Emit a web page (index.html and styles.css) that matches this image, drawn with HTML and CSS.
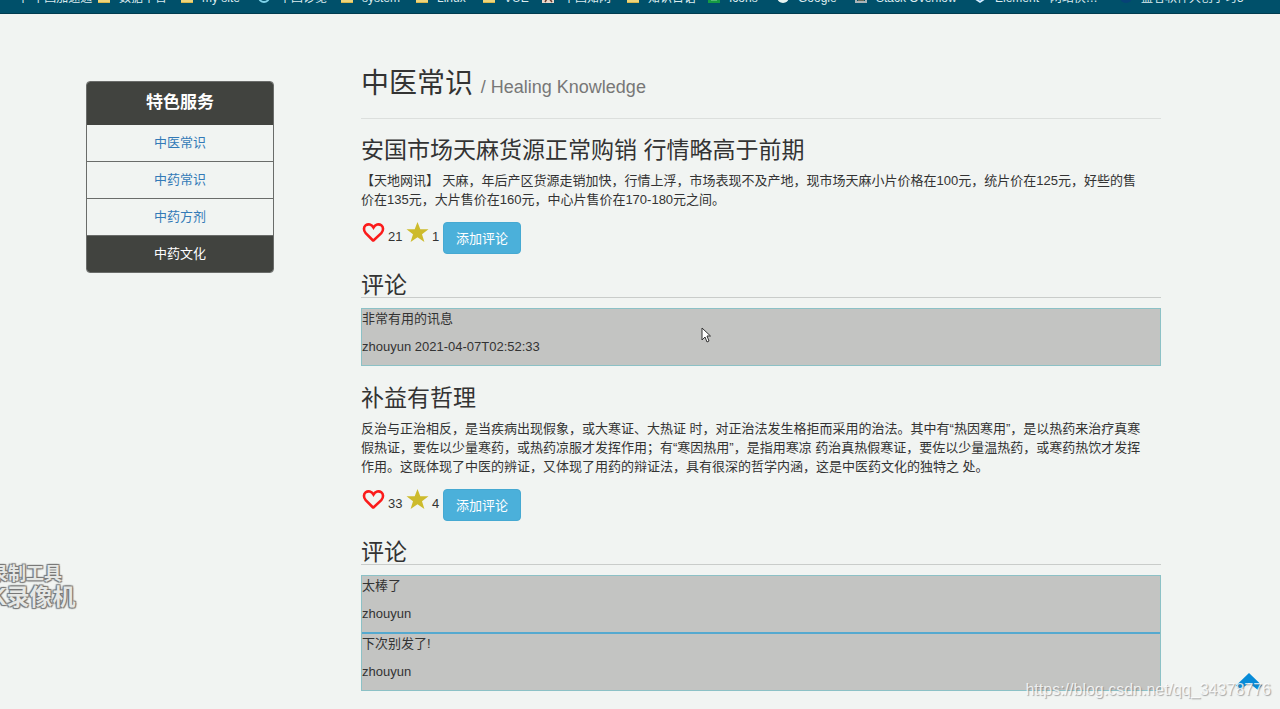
FILE: index.html
```html
<!DOCTYPE html>
<html lang="zh-CN">
<head>
<meta charset="utf-8">
<title>中医常识</title>
<link rel="stylesheet" href="styles.css">
</head>
<body>
<svg class="defs" aria-hidden="true">
  <symbol id="folder" viewBox="0 0 12 14"><path d="M0 3h5l1 2h6v9H0z" fill="#f0d57a"/><path d="M0 13h12v1H0z" fill="#d9b84e"/></symbol>
  <symbol id="heart" viewBox="0 0 24 22"><path d="M12 18.500 4.700 11.200C2.300 8.500 2.500 5 4.700 3.300 7.300 1.400 10.500 2.400 12.500 5.500 14.500 2.400 17.700 1.400 20.300 3.300 22.500 5 22.700 8.500 20.300 11.200L12.500 18.500Z" fill="none" stroke="#fb1b1b" stroke-width="2.600"/></symbol>
  <symbol id="star" viewBox="0 0 24 22"><path d="m12.500 0 2.800 7.300H23.500l-6.500 5 2.400 7.700L12.500 15.300 5.600 20l2.400-7.700-6.500-5h8.200z" fill="#cdbb2c"/></symbol>
</svg>

<nav class="bookmarks" aria-label="书签">
  <a href="#"><span>中 中国加速通</span></a>
  <a href="#"><svg><use href="#folder"/></svg><span>数据平台</span></a>
  <a href="#"><svg><use href="#folder"/></svg><span>my site</span></a>
  <a href="#"><svg viewBox="0 0 12 14"><circle cx="6" cy="8" r="5" fill="none" stroke="#7fd3ea" stroke-width="2"/></svg><span>中国诊览</span></a>
  <a href="#"><svg><use href="#folder"/></svg><span>system</span></a>
  <a href="#"><svg><use href="#folder"/></svg><span>Linux</span></a>
  <a href="#"><svg><use href="#folder"/></svg><span>VUE</span></a>
  <a href="#"><svg viewBox="0 0 12 14"><path d="M0 1h12v13H0z" fill="#ead9cc"/><path d="m3 13 3-5 4 5M4 6l5 4" fill="none" stroke="#6b3a2c" stroke-width="1.500"/></svg><span>中国知网</span></a>
  <a href="#"><svg><use href="#folder"/></svg><span>知识日语</span></a>
  <a href="#"><svg viewBox="0 0 12 14"><path d="M0 1h12v13H0z" fill="#159a43"/><path d="M3 11h6" stroke="#8fd5a5"/></svg><span>Icons</span></a>
  <a href="#"><svg viewBox="0 0 12 14"><circle cx="6" cy="8" r="6" fill="#e8f4f1"/><circle cx="6" cy="8" r="3" fill="#2b9a60"/></svg><span>Google</span></a>
  <a href="#"><svg viewBox="0 0 12 14"><path d="M1 6v7h10V6" fill="none" stroke="#a9b4b8" stroke-width="2"/><path d="M3 10h6" stroke="#d98642" stroke-width="3"/></svg><span>Stack Overflow</span></a>
  <a href="#"><svg viewBox="0 0 12 14"><path d="m6 1 6 4v5l-6 4-6-4V5z" fill="#d8efff"/><path d="m6 4 3 2v4l-3 2-3-2V6z" fill="#3f9be8"/></svg><span>Element - 网站快…</span></a>
  <a href="#"><svg viewBox="0 0 12 14"><circle cx="6" cy="8" r="6" fill="#064277"/></svg><span>益者软件大创学习5</span></a>
</nav>

<div class="page">
  <aside class="services">
    <h2>特色服务</h2>
    <ul>
      <li><a href="#">中医常识</a></li>
      <li><a href="#">中药常识</a></li>
      <li><a href="#">中药方剂</a></li>
      <li class="active"><a href="#">中药文化</a></li>
    </ul>
  </aside>

  <main>
    <header class="page-header">
      <h1>中医常识 <small>/ Healing Knowledge</small></h1>
    </header>

    <article>
      <h3>安国市场天麻货源正常购销 行情略高于前期</h3>
      <p>【天地网讯】 天麻，年后产区货源走销加快，行情上浮，市场表现不及产地，现市场天麻小片价格在100元，统片价在125元，好些的售<br>价在135元，大片售价在160元，中心片售价在170-180元之间。</p>
      <div class="actions">
        <svg role="img" aria-label="喜欢"><use href="#heart"/></svg><span class="count">21</span>
        <svg role="img" aria-label="收藏"><use href="#star"/></svg><span class="count end">1</span>
        <button type="button">添加评论</button>
      </div>
      <h3 class="comments-title">评论</h3>
      <ul class="comments">
        <li><p>非常有用的讯息</p><p>zhouyun 2021-04-07T02:52:33</p></li>
      </ul>
    </article>

    <article>
      <h3>补益有哲理</h3>
      <p>反治与正治相反，是当疾病出现假象，或大寒证、大热证 时，对正治法发生格拒而采用的治法。其中有“热因寒用”，是以热药来治疗真寒<br>假热证，要佐以少量寒药，或热药凉服才发挥作用；有“寒因热用”，是指用寒凉 药治真热假寒证，要佐以少量温热药，或寒药热饮才发挥<br>作用。这既体现了中医的辨证，又体现了用药的辩证法，具有很深的哲学内涵，这是中医药文化的独特之 处。</p>
      <div class="actions">
        <svg role="img" aria-label="喜欢"><use href="#heart"/></svg><span class="count">33</span>
        <svg role="img" aria-label="收藏"><use href="#star"/></svg><span class="count end">4</span>
        <button type="button">添加评论</button>
      </div>
      <h3 class="comments-title">评论</h3>
      <ul class="comments">
        <li><p>太棒了</p><p>zhouyun</p></li>
        <li><p>下次别发了!</p><p>zhouyun</p></li>
      </ul>
    </article>
  </main>
</div>

<div class="recorder"><div>录制工具</div><div class="big">K录像机</div></div>
<a class="to-top" href="#" aria-label="返回顶部"><svg viewBox="0 0 26 18"><path d="M13 0 26 12.500 22 17 13 10 4 17 0 12.500Z" fill="#078bd8"/></svg></a>
<div class="watermark">https://blog.csdn.net/qq_34378776</div>
<svg class="cursor" viewBox="0 0 10 16" aria-hidden="true"><path d="M1 1v12l3-3 2 5 2-1-2-5h3.500z" fill="#fff" stroke="#333"/></svg>
</body>
</html>
```

FILE: styles.css
```css
* { box-sizing: border-box; }
body {
  margin: 0;
  background: #f1f4f2;
  color: #333;
  font: 13px/19px "Liberation Sans", "Noto Sans CJK SC", sans-serif;
}
h1, h2, h3, p, ul { margin: 0; padding: 0; font-weight: 400; }
ul { list-style: none; }
a { color: #337ab7; text-decoration: none; }
.defs { display: none; }

.bookmarks {
  display: grid;
  grid-template-columns: 81px 83px 77px 83px 75px 67px 59px 85px 81px 69px 78px 119px 146px 1fr;
  align-content: end;
  height: 14px;
  padding: 0 0 6px 17px;
  overflow: hidden;
  background: #00506a;
  border-bottom: 1px solid #003c50;
}
.bookmarks a {
  display: flex;
  align-items: flex-end;
  gap: 9px;
  height: 18px;
  color: #dcebef;
  font-size: 12px;
  line-height: 18px;
  white-space: nowrap;
}
.bookmarks svg { flex: none; width: 12px; height: 14px; margin-bottom: 4px; }

.page {
  display: grid;
  grid-template-columns: 188px 1fr;
  column-gap: 87px;
  align-items: start;
  padding: 51px 119px 16px 86px;
}

.services {
  margin-top: 16px;
  overflow: hidden;
  border: 1px solid #6a6c6a;
  border-radius: 4px;
  text-align: center;
}
.services h2 {
  padding: 10px 0 11px;
  background: #41433f;
  color: #fff;
  font-size: 17px;
  font-weight: 700;
  line-height: 22px;
}
.services li { padding: 8px 0 9px; line-height: 19px; }
.services li + li { border-top: 1px solid #6a6c6a; }
.services .active { background: #41433f; }
.services .active a { color: #fff; }

.page-header { padding: 2px 0 14px; border-bottom: 1px solid #dcdfdd; }
h1 { font-size: 28px; line-height: 33px; }
h1 small { color: #777; font-size: 18px; }
article { padding-top: 19px; }
article + article { padding-top: 20px; }
h3 { font-size: 23px; line-height: 24px; }
article > p { margin-top: 9px; }

.actions { display: flex; align-items: flex-start; margin-top: 13px; }
.actions svg { width: 24px; height: 22px; }
.count { width: 20px; padding: 6px 0 0 3px; line-height: 18px; }
.count.end { width: 14px; padding-left: 3px; }
button {
  height: 32px;
  padding: 0 12px;
  border: 1px solid #46a9d2;
  border-radius: 4px;
  background: #4bb0da;
  color: #fff;
  font: inherit;
}
.comments-title { margin-top: 19px; border-bottom: 1px solid #c9ccca; }
.comments {
  margin-top: 10px;
  border: 1px solid #8cc1c6;
  background: #c3c4c2;
}
.comments li { padding-bottom: 9px; }
.comments li + li { border-top: 2px solid #55a9cf; }
.comments p + p { margin-top: 9px; }

.recorder {
  position: absolute;
  left: -10px;
  top: 563px;
  color: #e5e7e5;
  font-size: 18px;
  font-weight: 700;
  line-height: 22px;
  text-shadow: 1px 1px 1px #777, -1px -1px 1px #777, 1px -1px 1px #777, -1px 1px 1px #777;
}
.recorder .big { font-size: 23px; line-height: 24px; }
.to-top { position: absolute; right: 18px; top: 673px; }
.to-top svg { display: block; width: 26px; height: 18px; }
.watermark {
  position: absolute;
  right: 9px;
  top: 681px;
  color: rgba(255, 255, 255, .8);
  font-size: 16px;
  line-height: 18px;
  text-shadow: 1px 1px 1px rgba(110, 110, 110, .6);
}
.cursor { position: absolute; left: 701px; top: 327px; width: 10px; height: 16px; }
```
